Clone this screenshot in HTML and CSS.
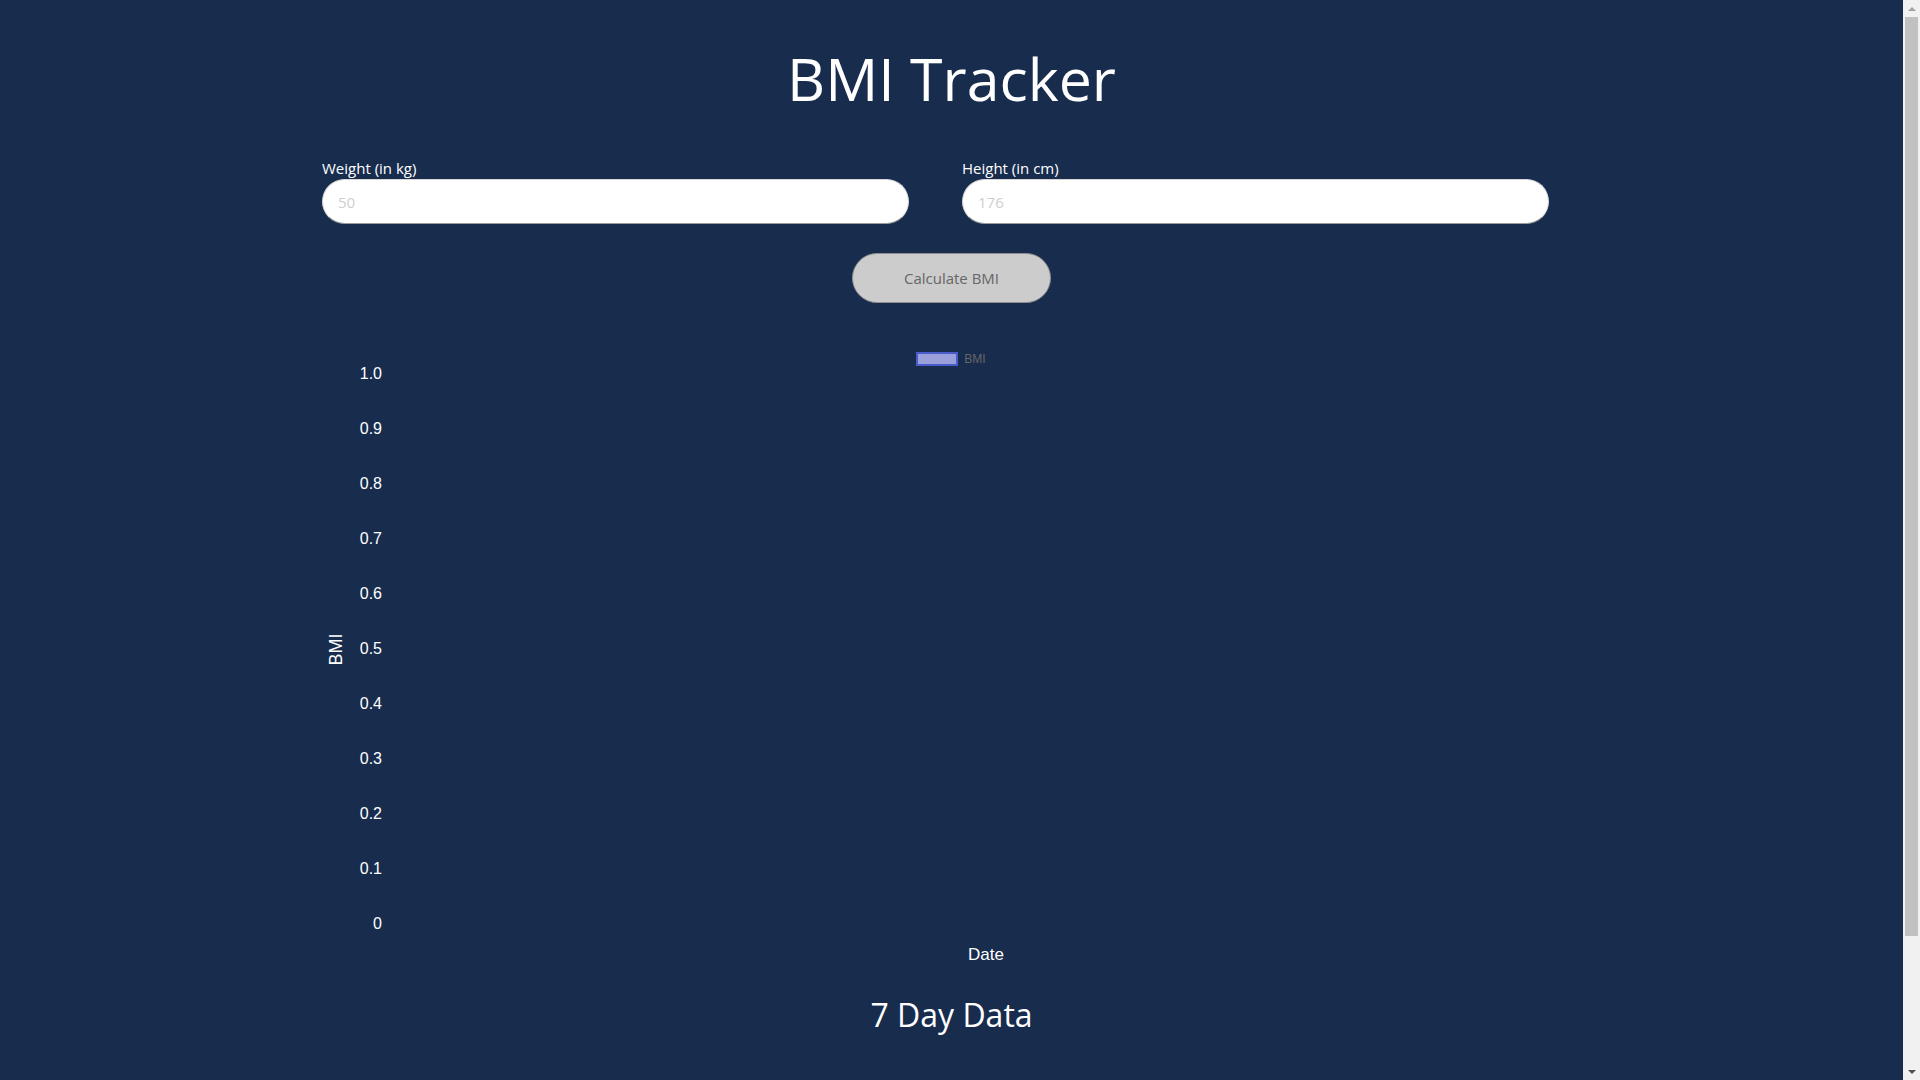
FILE: index.html
```html
<!DOCTYPE html>
<html lang="en">
<head>
<meta charset="utf-8">
<title>BMI Tracker</title>
<link rel="stylesheet" href="styles.css">
</head>
<body>
<div class="page">
  <main class="content">
    <h1 class="title">BMI Tracker</h1>
    <form class="form">
      <div class="field">
        <label class="label" for="weight">Weight (in kg)</label>
        <input class="input" id="weight" type="text" placeholder="50">
      </div>
      <div class="field">
        <label class="label" for="height">Height (in cm)</label>
        <input class="input" id="height" type="text" placeholder="176">
      </div>
    </form>
    <div class="actions">
      <button class="button" type="button">Calculate BMI</button>
    </div>
    <section class="chart">
      <div class="legend">
        <span class="legend-box"></span>
        <span class="legend-text">BMI</span>
      </div>
      <div class="y-title"><span>BMI</span></div>
      <div class="ticks">
        <span>1.0</span><span>0.9</span><span>0.8</span><span>0.7</span><span>0.6</span><span>0.5</span><span>0.4</span><span>0.3</span><span>0.2</span><span>0.1</span><span>0</span>
      </div>
      <div class="plot"></div>
      <div class="x-title">Date</div>
    </section>
    <h2 class="subtitle">7 Day Data</h2>
  </main>
  <div class="scrollbar">
    <div class="arrow arrow-up"></div>
    <div class="track"><div class="thumb"></div></div>
    <div class="arrow arrow-down"></div>
  </div>
</div>
</body>
</html>
```
FILE: styles.css
```css
* { box-sizing: border-box; }
html, body {
  margin: 0;
  padding: 0;
  height: 100%;
  overflow: hidden;
}
body {
  background: #182c4e;
  font-family: "Open Sans", "Noto Sans", sans-serif;
  color: #ffffff;
}
.page {
  display: flex;
  height: 1080px;
}
.content {
  flex: 1;
  min-width: 0;
  overflow: hidden;
}
.title {
  margin: 0;
  padding-top: 49px;
  font-size: 59px;
  font-weight: 400;
  line-height: 1;
  text-align: center;
}
.form {
  display: grid;
  grid-template-columns: 587px 587px;
  column-gap: 53px;
  padding-left: 322px;
  margin-top: 50px;
}
.field {
  display: flex;
  flex-direction: column;
}
.label {
  font-size: 15px;
  line-height: 20px;
  height: 21px;
  margin-bottom: 0;
}
.input {
  height: 45px;
  border: 1px solid #d6d6d6;
  border-bottom-color: #9a9a9a;
  border-radius: 23px;
  background: #ffffff;
  padding: 0 15px;
  font-family: "Open Sans", sans-serif;
  font-size: 15px;
  outline: none;
}
.input::placeholder { color: #cfcfcf; }
.actions {
  display: flex;
  justify-content: center;
  margin-top: 29px;
}
.button {
  width: 199px;
  height: 50px;
  border-radius: 25px;
  border: 1px solid #8f8f8f;
  background: #cccccc;
  color: #666666;
  font-family: "Open Sans", sans-serif;
  font-size: 15px;
}
.chart {
  display: grid;
  grid-template-columns: 28px 32px 1fr;
  grid-template-rows: 14px 566px 18px;
  row-gap: 0;
  width: 1258px;
  margin-left: 322px;
  margin-top: 49px;
  font-family: "Liberation Sans", Arial, sans-serif;
}
.legend {
  grid-column: 1 / 4;
  grid-row: 1;
  display: flex;
  justify-content: center;
  align-items: center;
  gap: 6px;
}
.legend-box {
  width: 42px;
  height: 14px;
  border: 2px solid #4a5ccc;
  background: #9aa1da;
}
.legend-text {
  font-size: 12px;
  color: #666666;
}
.y-title {
  grid-column: 1;
  grid-row: 2;
  display: flex;
  align-items: center;
  justify-content: center;
}
.y-title span {
  transform: rotate(-90deg);
  font-size: 18px;
  white-space: nowrap;
}
.ticks {
  grid-column: 2;
  grid-row: 2;
  display: flex;
  flex-direction: column;
  justify-content: space-between;
  align-items: flex-end;
  font-size: 16px;
  line-height: 16px;
}
.plot {
  grid-column: 3;
  grid-row: 2;
}
.x-title {
  grid-column: 3;
  grid-row: 3;
  margin-top: 14px;
  text-align: center;
  font-size: 17px;
  line-height: 18px;
  padding-left: 10px;
}
.subtitle {
  margin: 0;
  margin-top: 49px;
  font-size: 32px;
  font-weight: 400;
  line-height: 1;
  text-align: center;
}
.scrollbar {
  width: 17px;
  flex: none;
  background: #f1f1f1;
  display: flex;
  flex-direction: column;
}
.arrow {
  height: 17px;
  flex: none;
  display: flex;
  align-items: center;
  justify-content: center;
}
.arrow-up::before {
  content: "";
  border-left: 4px solid transparent;
  border-right: 4px solid transparent;
  border-bottom: 4px solid #a3a3a3;
}
.arrow-down::before {
  content: "";
  border-left: 4px solid transparent;
  border-right: 4px solid transparent;
  border-top: 4px solid #505050;
}
.track {
  flex: 1;
  padding: 0 2px;
}
.thumb {
  height: 919px;
  background: #c1c1c1;
}
```
